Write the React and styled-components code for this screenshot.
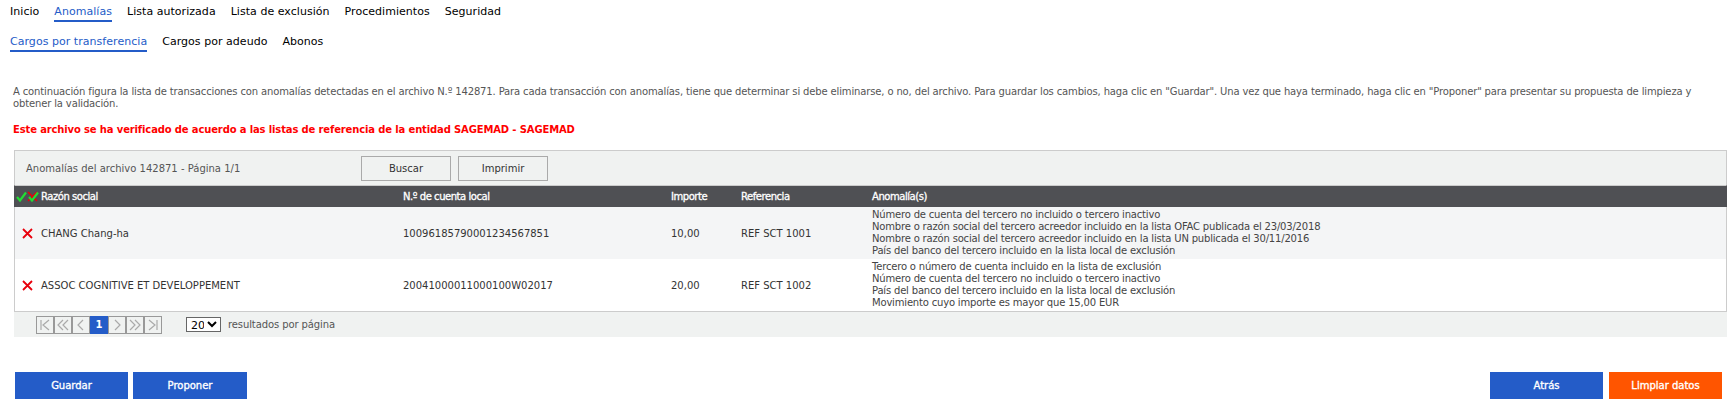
import React from 'react';
import styled, { createGlobalStyle } from 'styled-components';

const GlobalStyle = createGlobalStyle`
  html, body {
    margin: 0;
    padding: 0;
    background: #fff;
    font-family: "DejaVu Sans", Verdana, sans-serif;
    font-size: 10px;
    color: #333;
  }
`;

const Page = styled.div`
  width: 1730px;
  height: 410px;
  overflow: hidden;
  box-sizing: border-box;
  padding-top: 4px;
`;

const Tabs = styled.nav`
  display: flex;
  gap: 15px;
  height: ${({ $height }) => $height}px;
  padding-left: 10px;
  box-sizing: border-box;
`;

const Tab = styled.a`
  height: 18px;
  line-height: 15px;
  font-size: 11px;
  letter-spacing: 0.04px;
  white-space: nowrap;
  box-sizing: border-box;
  color: ${({ $active }) => ($active ? '#245cc8' : '#000')};
  border-bottom: 2px solid ${({ $active }) => ($active ? '#245cc8' : 'transparent')};
`;

const Intro = styled.p`
  margin: 33px 0 0 13px;
  width: 1716px;
  font-size: 10px;
  line-height: 12px;
  letter-spacing: -0.14px;
  color: #555;
`;

const Warning = styled.p`
  margin: 13px 0 0 13px;
  height: 14px;
  font-size: 10px;
  line-height: 14px;
  letter-spacing: -0.14px;
  font-weight: bold;
  color: #f00;
`;

const Panel = styled.section`
  margin: 13px 3px 0 14px;
  border-top: 1px solid #ccc;
`;

const Toolbar = styled.div`
  display: flex;
  align-items: center;
  height: 34px;
  padding-left: 11px;
  background: #f0f2f1;
  border-left: 1px solid #ccc;
  border-right: 1px solid #ccc;
`;

const ToolbarTitle = styled.span`
  width: 335px;
  color: #555;
`;

const ToolButton = styled.button`
  width: 90px;
  height: 25px;
  margin-right: 7px;
  padding: 0;
  font: inherit;
  color: #333;
  background: #f0f2f1;
  border: 1px solid #aaa;
`;

const Row = styled.div`
  display: grid;
  grid-template-columns: 26px 362px 268px 70px 131px 1fr;
  align-items: center;
  box-sizing: border-box;
  border-left: 1px solid #ccc;
  border-right: 1px solid #ccc;
  height: ${({ $height }) => $height}px;
  background: ${({ $bg }) => $bg};
`;

const HeadRow = styled(Row)`
  border-left-color: #4f5054;
  border-right-color: #4f5054;
  border-top: 1px solid #ccc;
  color: #fff;
  font-size: 10px;
  letter-spacing: -0.45px;
  -webkit-text-stroke: 0.3px #fff;
`;

const Cell = styled.div`
  white-space: nowrap;
  color: #333;
`;

const HeadCell = styled.div`
  white-space: nowrap;
`;

const Issues = styled.div`
  line-height: 12px;
  letter-spacing: -0.18px;
  color: #444;
  white-space: nowrap;
`;

const IconCell = styled.div`
  display: flex;
  align-items: center;
  padding-left: ${({ $pad }) => $pad}px;
`;

const Pager = styled.div`
  display: flex;
  align-items: center;
  height: 25px;
  padding-left: 22px;
  background: #f0f2f1;
  border-top: 1px solid #ccc;
  color: #555;
`;

const PageBtn = styled.span`
  display: flex;
  align-items: center;
  justify-content: center;
  width: 18px;
  height: 18px;
  box-sizing: border-box;
  font-weight: bold;
  font-size: 10px;
  color: #fff;
  border: 1px solid ${({ $active }) => ($active ? '#245cc8' : '#999')};
  background: ${({ $active }) => ($active ? '#245cc8' : 'transparent')};
`;

const PageSize = styled.select`
  width: 35px;
  height: 15px;
  margin: 0 7px 0 24px;
  padding: 0;
  font: 11px "DejaVu Sans", sans-serif;
  color: #000;
  background: #fff;
  border: 1px solid #666;
  border-radius: 0;
`;

const PagerLabel = styled.span`
  letter-spacing: -0.1px;
`;

const Actions = styled.div`
  display: flex;
  justify-content: space-between;
  margin: 35px 8px 0 15px;
`;

const ActionGroup = styled.div`
  display: flex;
  gap: ${({ $gap }) => $gap}px;
`;

const ActionButton = styled.button`
  width: ${({ $wide }) => ($wide ? 114 : 113)}px;
  height: 27px;
  padding: 0;
  border: 0;
  font: 10px "DejaVu Sans", sans-serif;
  -webkit-text-stroke: 0.35px #fff;
  color: #fff;
  background: ${({ $orange }) => ($orange ? '#ff5500' : '#245cc8')};
`;

const Cross = () => (
  <svg width="11" height="11" viewBox="0 0 11 11">
    <path d="M1 1 L10 10 M10 1 L1 10" stroke="#e8000c" strokeWidth="1.8" fill="none" />
  </svg>
);

const HeadIcons = () => (
  <IconCell $pad={1}>
    <svg width="11" height="11" viewBox="0 0 11 11">
      <path d="M1 6 L4 9.5 L10 1.5" stroke="#22dd33" strokeWidth="2.2" fill="none" />
    </svg>
    <svg width="12" height="11" viewBox="0 0 12 11">
      <path d="M1 1 L10 10 M10 1 L1 10" stroke="#e8000c" strokeWidth="1.6" fill="none" />
      <path d="M2 6 L5 9.5 L11 1.5" stroke="#22dd33" strokeWidth="2.2" fill="none" />
    </svg>
  </IconCell>
);

const pagerIcons = {
  first: 'M4 3 V13 M12 3 L6 8 L12 13',
  prevMore: 'M8 3 L3 8 L8 13 M13 3 L8 8 L13 13',
  prev: 'M10 3 L5 8 L10 13',
  next: 'M6 3 L11 8 L6 13',
  nextMore: 'M3 3 L8 8 L3 13 M8 3 L13 8 L8 13',
  last: 'M12 3 V13 M4 3 L10 8 L4 13',
};

const PagerIcon = ({ name }) => (
  <PageBtn>
    <svg width="16" height="16" viewBox="0 0 16 16">
      <path d={pagerIcons[name]} stroke="#aaa" strokeWidth="1.2" fill="none" />
    </svg>
  </PageBtn>
);

const rows = [
  {
    name: 'CHANG Chang-ha',
    account: '10096185790001234567851',
    amount: '10,00',
    ref: 'REF SCT 1001',
    bg: '#f4f5f6',
    issues: [
      'Número de cuenta del tercero no incluido o tercero inactivo',
      'Nombre o razón social del tercero acreedor incluido en la lista OFAC publicada el 23/03/2018',
      'Nombre o razón social del tercero acreedor incluido en la lista UN publicada el 30/11/2016',
      'País del banco del tercero incluido en la lista local de exclusión',
    ],
  },
  {
    name: 'ASSOC COGNITIVE ET DEVELOPPEMENT',
    account: '20041000011000100W02017',
    amount: '20,00',
    ref: 'REF SCT 1002',
    bg: '#fff',
    issues: [
      'Tercero o número de cuenta incluido en la lista de exclusión',
      'Número de cuenta del tercero no incluido o tercero inactivo',
      'País del banco del tercero incluido en la lista local de exclusión',
      'Movimiento cuyo importe es mayor que 15,00 EUR',
    ],
  },
];

const App = () => (
  <Page>
    <GlobalStyle />
    <Tabs $height={30}>
      <Tab>Inicio</Tab>
      <Tab $active>Anomalías</Tab>
      <Tab>Lista autorizada</Tab>
      <Tab>Lista de exclusión</Tab>
      <Tab>Procedimientos</Tab>
      <Tab>Seguridad</Tab>
    </Tabs>
    <Tabs $height={19}>
      <Tab $active>Cargos por transferencia</Tab>
      <Tab>Cargos por adeudo</Tab>
      <Tab>Abonos</Tab>
    </Tabs>
    <Intro>
      A continuación figura la lista de transacciones con anomalías detectadas en el archivo N.º 142871. Para cada transacción con anomalías, tiene que determinar si debe eliminarse, o no, del archivo. Para guardar los cambios, haga clic en "Guardar". Una vez que haya terminado, haga clic en "Proponer" para presentar su propuesta de limpieza y obtener la validación.
    </Intro>
    <Warning>Este archivo se ha verificado de acuerdo a las listas de referencia de la entidad SAGEMAD - SAGEMAD</Warning>
    <Panel>
      <Toolbar>
        <ToolbarTitle>Anomalías del archivo 142871 - Página 1/1</ToolbarTitle>
        <ToolButton>Buscar</ToolButton>
        <ToolButton>Imprimir</ToolButton>
      </Toolbar>
      <HeadRow $height={22} $bg="#4f5054">
        <HeadIcons />
        <HeadCell>Razón social</HeadCell>
        <HeadCell>N.º de cuenta local</HeadCell>
        <HeadCell>Importe</HeadCell>
        <HeadCell>Referencia</HeadCell>
        <HeadCell>Anomalía(s)</HeadCell>
      </HeadRow>
      {rows.map((row) => (
        <Row key={row.ref} $height={52} $bg={row.bg}>
          <IconCell $pad={7}>
            <Cross />
          </IconCell>
          <Cell>{row.name}</Cell>
          <Cell>{row.account}</Cell>
          <Cell>{row.amount}</Cell>
          <Cell>{row.ref}</Cell>
          <Issues>
            {row.issues.map((issue) => (
              <div key={issue}>{issue}</div>
            ))}
          </Issues>
        </Row>
      ))}
      <Pager>
        <PagerIcon name="first" />
        <PagerIcon name="prevMore" />
        <PagerIcon name="prev" />
        <PageBtn $active>1</PageBtn>
        <PagerIcon name="next" />
        <PagerIcon name="nextMore" />
        <PagerIcon name="last" />
        <PageSize defaultValue="20">
          <option>20</option>
          <option>50</option>
        </PageSize>
        <PagerLabel>resultados por página</PagerLabel>
      </Pager>
    </Panel>
    <Actions>
      <ActionGroup $gap={5}>
        <ActionButton>Guardar</ActionButton>
        <ActionButton $wide>Proponer</ActionButton>
      </ActionGroup>
      <ActionGroup $gap={6}>
        <ActionButton>Atrás</ActionButton>
        <ActionButton $orange>Limpiar datos</ActionButton>
      </ActionGroup>
    </Actions>
  </Page>
);

export default App;
